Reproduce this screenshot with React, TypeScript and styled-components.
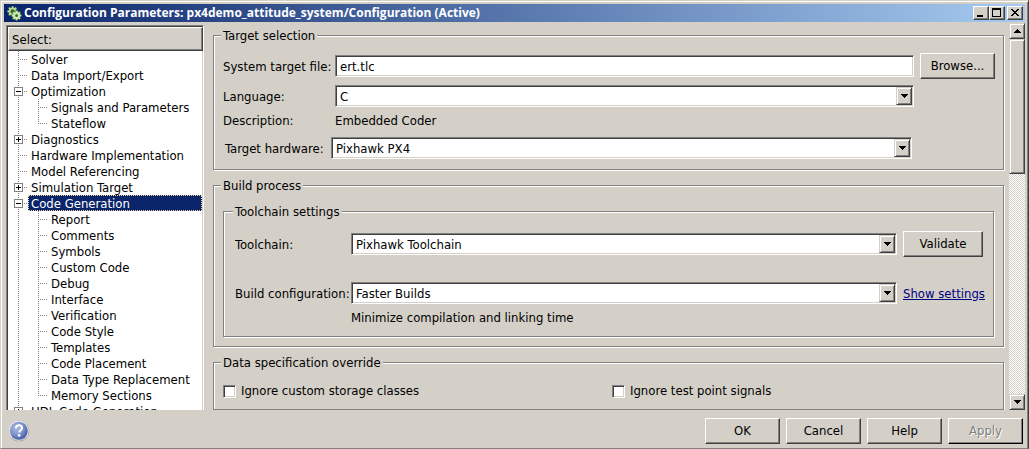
import React, { useState } from "react";
import styled, { createGlobalStyle, css } from "styled-components";

const FACE = "#d4d0c8";
const SHADOW = "#808080";
const DARK = "#404040";
const NAVY = "#0a246a";

const GlobalStyle = createGlobalStyle`
  * { box-sizing: border-box; }
  body {
    margin: 0;
    background: ${FACE};
    color: #000;
    font: 13px/16px "DejaVu Sans Condensed", Tahoma, "DejaVu Sans", sans-serif;
  }
  button, input, select { font: inherit; color: inherit; margin: 0; border-radius: 0; }
`;

const raised = css`
  background: ${FACE};
  border: 1px solid;
  border-color: #fff ${DARK} ${DARK} #fff;
  box-shadow: inset -1px -1px 0 ${SHADOW};
`;

const raisedSoft = css`
  background: ${FACE};
  border: 1px solid;
  border-color: ${FACE} ${DARK} ${DARK} ${FACE};
  box-shadow: inset 1px 1px 0 #fff, inset -1px -1px 0 ${SHADOW};
`;

const sunken = css`
  background: #fff;
  border: 1px solid;
  border-color: ${SHADOW} #fff #fff ${SHADOW};
  box-shadow: inset 1px 1px 0 ${DARK}, inset -1px -1px 0 ${FACE};
`;

const Window = styled.div`
  display: flex;
  flex-direction: column;
  height: 100vh;
  padding: 3px 3px 0;
  background: ${FACE};
  border: 1px solid;
  border-color: ${FACE} ${DARK} ${SHADOW} ${FACE};
  box-shadow: inset 1px 1px 0 #fff, inset -1px 0 0 ${SHADOW};
  overflow: hidden;
`;

const TitleBar = styled.header`
  display: flex;
  align-items: center;
  flex: none;
  height: 18px;
  padding: 0 2px 0 3px;
  background: linear-gradient(to right, ${NAVY}, #a6caf0);
`;

const Title = styled.h1`
  flex: 1;
  margin: 0 0 0 2px;
  color: #fff;
  font-family: "Open Sans", Tahoma, sans-serif;
  font-size: 12px;
  line-height: 18px;
  font-weight: bold;
  white-space: nowrap;
`;

const CaptionButton = styled.button<{ $apart?: boolean }>`
  ${raised}
  display: flex;
  width: 16px;
  height: 14px;
  padding: 0;
  margin-left: ${(p) => (p.$apart ? "2px" : "0")};
`;

const Body = styled.div`
  display: flex;
  flex: 1;
  min-height: 0;
`;

const TreePanel = styled.nav`
  flex: none;
  width: 198px;
  margin: 3px 0 0 2px;
  padding: 1px 0 0 1px;
  background: #fff;
  border: 1px solid;
  border-width: 1px 1px 0 1px;
  border-color: ${SHADOW} #fff #fff ${SHADOW};
  box-shadow: inset 1px 1px 0 ${DARK}, inset -1px 0 0 ${FACE};
  overflow: hidden;
`;

const TreeHeader = styled.div`
  ${raised}
  height: 24px;
  padding: 4px 3px;
`;

const TreeList = styled.ul`
  margin: 0 1px 0 0;
  padding: 0;
  list-style: none;
`;

const TreeRow = styled.li`
  display: flex;
  height: 16px;
`;

const dotsDown = "linear-gradient(#808080 50%, transparent 0) 10px 0 / 1px 2px repeat-y";
const dotsAcross = "linear-gradient(to right, #808080 50%, transparent 0) 10px 8px / 2px 1px repeat-x";
const maskDown = "linear-gradient(#fff, #fff) 10px 9px / 1px 7px no-repeat";
const maskAcross = "linear-gradient(#fff, #fff) 0 8px / 10px 1px no-repeat";

const Guide = styled.span<{ $branch?: boolean; $last?: boolean }>`
  flex: none;
  width: 20px;
  padding: 4px 0 0 6px;
  background: ${(p) =>
    [p.$last && maskDown, p.$branch && maskAcross, p.$branch && dotsAcross, dotsDown]
      .filter(Boolean)
      .join(", ")};
`;

const Expander = styled.button`
  display: block;
  width: 9px;
  height: 9px;
  padding: 0;
  border: 1px solid ${SHADOW};
  background: #fff;

  svg { display: block; }
`;

const TreeLabel = styled.a<{ $selected?: boolean }>`
  flex: 1;
  padding-left: 3px;
  line-height: 17px;
  color: ${(p) => (p.$selected ? "#fff" : "#000")};
  background: ${(p) => (p.$selected ? NAVY : "transparent")};
  outline: ${(p) => (p.$selected ? "1px dotted #f5db95" : "none")};
  outline-offset: -1px;
  text-decoration: none;
  white-space: nowrap;
`;

const Pane = styled.main`
  display: flex;
  flex-direction: column;
  gap: 7px;
  flex: 1;
  min-width: 0;
  padding: 5px 5px 0 9px;
  overflow: hidden;
`;

const Group = styled.fieldset<{ $pad: string }>`
  flex: none;
  min-width: 0;
  margin: 0;
  padding: ${(p) => p.$pad};
  border: 1px solid ${SHADOW};
  box-shadow: 1px 1px 0 #fff, inset 1px 1px 0 #fff;
`;

const Legend = styled.legend`
  margin-left: -2px;
  padding: 0 2px;
  line-height: 17px;
  background: ${FACE};
`;

const FieldRow = styled.div<{ $label: number; $end: number; $gap?: number; $inset?: number }>`
  display: grid;
  grid-template-columns: ${(p) => p.$label}px minmax(0, 1fr) ${(p) => p.$end}px;
  align-items: center;
  margin-top: ${(p) => p.$gap ?? 0}px;
  padding: 0 ${(p) => p.$inset ?? 0}px;
  white-space: nowrap;

  & > label, & > a { padding-top: 2px; }
  & > :nth-child(3) { margin-left: 6px; }
`;

const TextInput = styled.input`
  ${sunken}
  width: 100%;
  height: 22px;
  padding: 0 4px;
  outline: none;
`;

const SelectBox = styled.div`
  position: relative;
`;

const NativeSelect = styled.select`
  ${sunken}
  display: block;
  appearance: none;
  width: 100%;
  height: 22px;
  padding: 2px 20px 0 4px;
  outline: none;
`;

const DropArrow = styled.span`
  ${raisedSoft}
  position: absolute;
  top: 2px;
  right: 2px;
  display: grid;
  place-items: center;
  width: 16px;
  height: 18px;
  pointer-events: none;
`;

const PushButton = styled.button<{ $wide?: boolean }>`
  ${raised}
  width: ${(p) => (p.$wide ? "80px" : "75px")};
  height: 26px;
  padding: 0;

  &:disabled {
    color: ${SHADOW};
    text-shadow: 1px 1px 0 #fff;
    border-color: #fff #000 #000 #fff;
  }
`;

const SettingsLink = styled.a`
  color: #000080;
  text-decoration: underline;
`;

const CheckGrid = styled.div`
  display: grid;
  grid-template-columns: 1fr 1fr;
  column-gap: 6px;
`;

const CheckLabel = styled.label`
  display: flex;
  align-items: center;
  gap: 5px;
`;

const CheckBox = styled.input`
  ${sunken}
  appearance: none;
  width: 13px;
  height: 13px;

  &:checked { background: radial-gradient(#000 40%, #fff 45%); }
`;

const ScrollTrack = styled.div`
  display: flex;
  flex-direction: column;
  flex: none;
  width: 16px;
  margin-top: 1px;
  background: repeating-conic-gradient(#fff 0 25%, ${FACE} 0 50%) 0 0 / 2px 2px;
`;

const ScrollButton = styled.button`
  ${raisedSoft}
  display: grid;
  place-items: center;
  flex: none;
  width: 16px;
  height: 16px;
  padding: 0;
`;

const ScrollThumb = styled.div`
  ${raisedSoft}
  flex: 0 0 35%;
  margin-bottom: auto;
`;

const Footer = styled.footer`
  display: flex;
  align-items: center;
  gap: 6px;
  flex: none;
  height: 38px;
  padding: 4px 2px 0 4px;
`;

const HelpButton = styled.button`
  width: 22px;
  height: 22px;
  margin-right: auto;
  padding: 0;
  border: 0;
  background: none;

  svg { display: block; }
`;

const Arrow = ({ up = false }: { up?: boolean }) => (
  <svg width="7" height="4" viewBox="0 0 7 4" shapeRendering="crispEdges" aria-hidden="true">
    <path d={up ? "M3 0h1v1h1v1h1v1h1v1H0V3h1V2h1V1h1z" : "M0 0h7v1H6v1H5v1H4v1H3V3H2V2H1V1H0z"} />
  </svg>
);

const GEAR_TEETH = [0, 45, 90, 135, 180, 225, 270, 315];

const Gear = ({ x, y, r, fill, hole }: { x: number; y: number; r: number; fill: string; hole: string }) => (
  <g transform={`translate(${x} ${y})`}>
    {GEAR_TEETH.map((a) => (
      <rect key={a} x={-0.9} y={-r - 1.2} width={1.8} height={2.4} fill={fill} transform={`rotate(${a})`} />
    ))}
    <circle r={r} fill={fill} />
    <circle r={r - 1.9} fill={hole} />
  </g>
);

const AppIcon = () => (
  <svg width="15" height="15" viewBox="0 0 15 15" aria-hidden="true">
    <Gear x={5.6} y={5.4} r={4} fill="#b9d99a" hole="#2c6b1e" />
    <Gear x={9.4} y={9.4} r={4.1} fill="#3c8a24" hole="#3c8a24" />
    <Gear x={9.6} y={9.6} r={3.4} fill="#d3e8bd" hole="#2f7a1c" />
  </svg>
);

const HelpIcon = () => (
  <svg width="22" height="22" viewBox="0 0 22 22" aria-hidden="true">
    <defs>
      <radialGradient id="helpBall" cx="38%" cy="35%" r="75%">
        <stop offset="0" stopColor="#a9b9e0" />
        <stop offset="0.5" stopColor="#8095cc" />
        <stop offset="1" stopColor="#2f4a96" />
      </radialGradient>
    </defs>
    <circle cx="11" cy="11" r="10.5" fill="#a3a3a8" />
    <circle cx="10.7" cy="10.7" r="10.1" fill="#e6e6ea" />
    <circle cx="10.8" cy="10.8" r="9" fill="url(#helpBall)" />
    <path
      d="M7.8 8.2c.1-2 1.4-3 3.1-3s3.1 1 3.1 2.7c0 2.4-2.7 2.4-2.7 4.7"
      fill="none"
      stroke="#fff"
      strokeWidth="2"
    />
    <circle cx="11.2" cy="15.4" r="1.3" fill="#fff" />
  </svg>
);

type Node = { name: string; open?: boolean; children?: string[] };

const NODES: Node[] = [
  { name: "Solver" },
  { name: "Data Import/Export" },
  { name: "Optimization", open: true, children: ["Signals and Parameters", "Stateflow"] },
  { name: "Diagnostics", open: false },
  { name: "Hardware Implementation" },
  { name: "Model Referencing" },
  { name: "Simulation Target", open: false },
  {
    name: "Code Generation",
    open: true,
    children: [
      "Report",
      "Comments",
      "Symbols",
      "Custom Code",
      "Debug",
      "Interface",
      "Verification",
      "Code Style",
      "Templates",
      "Code Placement",
      "Data Type Replacement",
      "Memory Sections",
    ],
  },
  { name: "HDL Code Generation", open: false },
];

const Tree = () => {
  const [selected, setSelected] = useState("Code Generation");
  const label = (name: string) => (
    <TreeLabel
      href="#"
      $selected={name === selected}
      onClick={(e) => {
        e.preventDefault();
        setSelected(name);
      }}
    >
      {name}
    </TreeLabel>
  );
  return (
    <TreeList>
      {NODES.map((node) => (
        <React.Fragment key={node.name}>
          <TreeRow>
            <Guide $branch>
              {node.open !== undefined && (
                <Expander aria-label={`${node.open ? "Collapse" : "Expand"} ${node.name}`}>
                  <svg width="7" height="7" shapeRendering="crispEdges">
                    <path d={node.open ? "M1 3h5v1H1z" : "M1 3h2V1h1v2h2v1H4v2H3V4H1z"} />
                  </svg>
                </Expander>
              )}
            </Guide>
            {label(node.name)}
          </TreeRow>
          {node.children?.map((child, i, all) => (
            <TreeRow key={child}>
              <Guide />
              <Guide $branch $last={i === all.length - 1} />
              {label(child)}
            </TreeRow>
          ))}
        </React.Fragment>
      ))}
    </TreeList>
  );
};

const Select = ({ id, value }: { id: string; value: string }) => (
  <SelectBox>
    <NativeSelect id={id} defaultValue={value}>
      <option>{value}</option>
    </NativeSelect>
    <DropArrow>
      <Arrow />
    </DropArrow>
  </SelectBox>
);

export default function App() {
  return (
    <>
      <GlobalStyle />
      <Window>
        <TitleBar>
          <AppIcon />
          <Title>Configuration Parameters: px4demo_attitude_system/Configuration (Active)</Title>
          <CaptionButton aria-label="Minimize">
            <svg width="14" height="12" shapeRendering="crispEdges">
              <path d="M3 8h6v2H3z" />
            </svg>
          </CaptionButton>
          <CaptionButton aria-label="Maximize">
            <svg width="14" height="12" shapeRendering="crispEdges">
              <path fillRule="evenodd" d="M2 1h9v9H2zM3 3v6h7V3z" />
            </svg>
          </CaptionButton>
          <CaptionButton aria-label="Close" $apart>
            <svg width="14" height="12" shapeRendering="crispEdges">
              <path d="M3 2h2v1h1v1h2V3h1V2h2v1h-1v1H9v1H8v1h1v1h1v1h1v1H9V8H8V7H6v1H5v1H3V8h1V7h1V6h1V5H5V4H4V3H3z" />
            </svg>
          </CaptionButton>
        </TitleBar>

        <Body>
          <TreePanel aria-label="Categories">
            <TreeHeader>Select:</TreeHeader>
            <Tree />
          </TreePanel>

          <Pane>
            <Group $pad="9px 8px 10px 9px">
              <Legend>Target selection</Legend>
              <FieldRow $label={112} $end={81}>
                <label htmlFor="stf">System target file:</label>
                <TextInput id="stf" defaultValue="ert.tlc" />
                <PushButton>Browse...</PushButton>
              </FieldRow>
              <FieldRow $label={112} $end={81} $gap={6}>
                <label htmlFor="lang">Language:</label>
                <Select id="lang" value="C" />
              </FieldRow>
              <FieldRow $label={112} $end={81} $gap={6}>
                <span>Description:</span>
                <span>Embedded Coder</span>
              </FieldRow>
              <FieldRow $label={106} $end={81} $gap={8} $inset={2}>
                <label htmlFor="hardware">Target hardware:</label>
                <Select id="hardware" value="Pixhawk PX4" />
              </FieldRow>
            </Group>

            <Group $pad="9px">
              <Legend>Build process</Legend>
              <Group $pad="11px 10px 10px 11px">
                <Legend>Toolchain settings</Legend>
                <FieldRow $label={116} $end={86}>
                  <label htmlFor="toolchain">Toolchain:</label>
                  <Select id="toolchain" value="Pixhawk Toolchain" />
                  <PushButton $wide>Validate</PushButton>
                </FieldRow>
                <FieldRow $label={116} $end={86} $gap={25}>
                  <label htmlFor="build">Build configuration:</label>
                  <Select id="build" value="Faster Builds" />
                  <SettingsLink href="#">Show settings</SettingsLink>
                </FieldRow>
                <FieldRow $label={116} $end={86} $gap={6}>
                  <span />
                  <span>Minimize compilation and linking time</span>
                </FieldRow>
              </Group>
            </Group>

            <Group $pad="12px 8px 10px 9px">
              <Legend>Data specification override</Legend>
              <CheckGrid>
                <CheckLabel>
                  <CheckBox type="checkbox" />
                  Ignore custom storage classes
                </CheckLabel>
                <CheckLabel>
                  <CheckBox type="checkbox" />
                  Ignore test point signals
                </CheckLabel>
              </CheckGrid>
            </Group>
          </Pane>

          <ScrollTrack>
            <ScrollButton aria-label="Scroll up">
              <Arrow up />
            </ScrollButton>
            <ScrollThumb />
            <ScrollButton aria-label="Scroll down">
              <Arrow />
            </ScrollButton>
          </ScrollTrack>
        </Body>

        <Footer>
          <HelpButton aria-label="Help contents">
            <HelpIcon />
          </HelpButton>
          <PushButton>OK</PushButton>
          <PushButton>Cancel</PushButton>
          <PushButton>Help</PushButton>
          <PushButton disabled>Apply</PushButton>
        </Footer>
      </Window>
    </>
  );
}
